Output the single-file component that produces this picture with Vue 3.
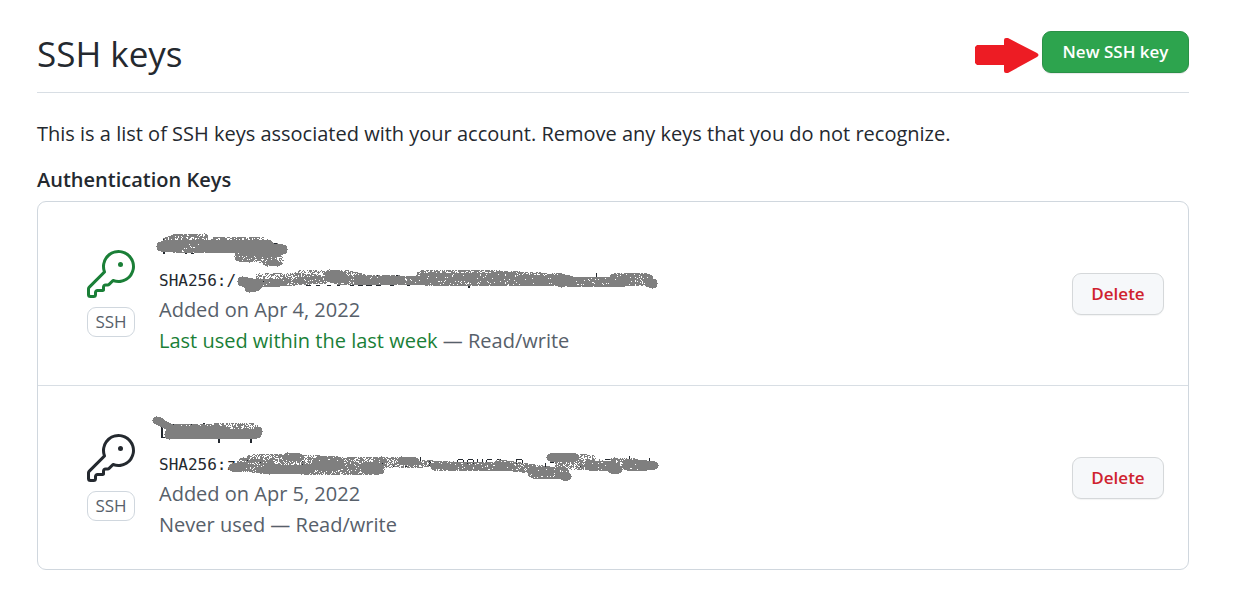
<script setup>
const OCTICON_KEY =
  'M15.75 0a8.25 8.25 0 1 1-2.541 16.101l-1.636 1.636a1.744 1.744 0 0 1-1.237.513H9.25a.25.25 0 0 0-.25.25v1.448a.876.876 0 0 1-.256.619l-.214.213a.75.75 0 0 1-.545.22H5.25a.25.25 0 0 0-.25.25v1A1.75 1.75 0 0 1 3.25 24h-1.5A1.75 1.75 0 0 1 0 22.25v-2.836c0-.464.185-.908.513-1.236l7.386-7.388A8.249 8.249 0 0 1 15.75 0ZM9 8.25a6.733 6.733 0 0 0 .463 2.462.75.75 0 0 1-.168.804l-7.722 7.721a.25.25 0 0 0-.073.177v2.836c0 .138.112.25.25.25h1.5a.25.25 0 0 0 .25-.25v-1c0-.966.784-1.75 1.75-1.75H7.5v-1c0-.966.784-1.75 1.75-1.75h1.086a.25.25 0 0 0 .177-.073l1.971-1.972a.75.75 0 0 1 .804-.168A6.75 6.75 0 1 0 9 8.25Z'

// Brush strokes: [x1, y1, x2, y2, radius, density].
// Each stroke is rasterised to single-pixel squares so sparse ones look sprayed.
function spray(strokes, seed) {
  let s = seed
  const rand = () => {
    s = (s * 1664525 + 1013904223) % 4294967296
    return s / 4294967296
  }
  const hit = new Set()
  for (const [x1, y1, x2, y2, r, density] of strokes) {
    const dx = x2 - x1
    const dy = y2 - y1
    const len = dx * dx + dy * dy || 1
    for (let y = Math.floor(Math.min(y1, y2) - r); y <= Math.max(y1, y2) + r; y++) {
      for (let x = Math.floor(Math.min(x1, x2) - r); x <= Math.max(x1, x2) + r; x++) {
        const t = Math.max(0, Math.min(1, ((x - x1) * dx + (y - y1) * dy) / len))
        const d = Math.hypot(x - x1 - t * dx, y - y1 - t * dy)
        if (d <= r && rand() < density) hit.add(x + ',' + y)
      }
    }
  }
  return [...hit].map((p) => `M${p.replace(',', ' ')}h1v1h-1z`).join('')
}

const keys = [
  {
    id: 1,
    active: true,
    prefix: 'SHA256:/',
    added: 'Added on Apr 4, 2022',
    used: 'Last used within the last week',
    ink: 'M4 7h2v2h-2zM4 20h2v2h-2zM26 21h2v1h-2zM32 21h3v1h-3zM43 8h2v2h-2zM62 6h1v2h-1zM115 11h4v1h-4zM118 12h2v2h-2zM110 23h2v6h-2zM104 47h1v4h-1zM102 49h5v1h-5zM116 48h3v2h-3zM125 48h3v1h-3zM147 53h5v1h-5zM157 53h4v1h-4zM168 53h4v1h-4zM178 53h3v1h-3zM191 53h4v1h-4zM199 53h5v1h-5zM207 53h6v1h-6zM217 53h5v1h-5zM208 43h4v1h-4zM217 43h4v1h-4zM227 43h4v1h-4zM237 43h4v1h-4zM231 53h4v1h-4zM248 53h3v1h-3zM309 53h2v3h-2zM437 41h1v5h-1z',
    marks: spray(
      [
        [6, 9, 12, 7, 4, 0.75], [14, 6, 45, 5, 4, 0.75],
        [2, 14, 18, 14, 5, 1], [14, 14, 48, 14, 6, 0.95], [46, 14, 88, 14, 6, 1],
        [84, 15, 108, 14, 7, 1], [96, 18, 117, 19, 6, 1], [118, 16, 123, 17, 5, 1],
        [56, 9, 104, 10, 5, 0.7], [80, 24, 90, 25, 5, 0.9],
        [92, 23, 108, 25, 6, 0.65], [108, 29, 119, 28, 5, 0.7], [110, 30, 118, 31, 3, 0.95]
      ],
      11
    ),
    hash: spray(
      [
        [83, 49, 98, 52, 5, 1], [90, 55, 96, 54, 5, 1], [98, 51, 120, 50, 4, 0.93],
        [100, 46, 145, 45, 5, 0.5], [120, 50, 166, 47, 4, 0.8],
        [140, 43, 170, 42, 5, 0.55], [171, 44, 180, 44, 6, 1],
        [178, 47, 240, 48, 5, 0.8], [184, 42, 202, 46, 5, 0.5],
        [200, 48, 268, 48, 4, 0.93], [262, 43, 340, 43, 5, 0.65],
        [266, 47, 366, 47, 6, 0.88], [340, 43, 402, 46, 5, 0.7],
        [365, 48, 410, 48, 5, 0.95], [402, 50, 465, 49, 5, 0.95],
        [455, 47, 488, 47, 6, 0.85], [490, 50, 493, 51, 5, 1]
      ],
      23
    )
  },
  {
    id: 2,
    active: false,
    prefix: 'SHA256:z',
    added: 'Added on Apr 5, 2022',
    used: 'Never used',
    ink: 'M2 10h2v12h-2zM4 21h3v1h-3zM14 8h4v1h-4zM20 8h4v1h-4zM31 8h3v1h-3zM44 7h2v4h-2zM59 23h2v4h-2zM91 23h2v4h-2zM101 12h1v6h-1zM87 44h8v1h-8zM100 45h2v3h-2zM143 45h2v5h-2zM223 44h2v7h-2zM234 50h3v1h-3zM246 50h4v1h-4zM261 41h1v7h-1zM270 44h2v6h-2zM299 43h5v1h-5zM298 44h1v4h-1zM304 44h1v4h-1zM309 43h5v1h-5zM308 44h1v4h-1zM314 44h1v4h-1zM318 43h1v4h-1zM323 43h1v4h-1zM328 43h5v1h-5zM327 44h1v4h-1zM338 43h4v1h-4zM357 43h6v1h-6zM357 44h1v4h-1zM363 44h1v3h-1zM386 47h1v4h-1zM391 46h4v1h-4zM421 50h4v1h-4zM446 43h5v1h-5zM454 55h5v1h-5zM470 40h1v7h-1zM490 42h1v6h-1zM486 46h4v1h-4z',
    marks: spray(
      [
        [-3, 4, 1, 5, 4, 1], [1, 6, 13, 12, 4, 1], [10, 18, 97, 17, 5, 1],
        [15, 12, 58, 12, 4, 0.85], [55, 12, 94, 12, 5, 0.6], [96, 17, 98, 15, 5, 0.9],
        [12, 14, 65, 15, 5, 1]
      ],
      37
    ),
    hash: spray(
      [
        [73, 51, 82, 51, 4, 1], [84, 48, 110, 51, 7, 0.88],
        [91, 42, 135, 41, 4, 0.6], [128, 40, 140, 41, 4, 0.92],
        [108, 53, 150, 53, 4, 1], [116, 46, 160, 46, 7, 0.6],
        [160, 47, 178, 47, 7, 0.96], [142, 53, 220, 53, 5, 0.8],
        [176, 47, 222, 46, 6, 0.7], [207, 51, 218, 52, 6, 1],
        [218, 46, 252, 46, 5, 0.55], [242, 44, 256, 45, 4, 1],
        [252, 47, 296, 49, 4, 0.65], [275, 50, 350, 50, 4, 0.9],
        [340, 48, 390, 55, 5, 0.85], [374, 56, 404, 57, 6, 0.88], [404, 60, 408, 60, 4, 1],
        [391, 41, 416, 41, 4, 1], [400, 49, 440, 48, 5, 0.65],
        [416, 42, 432, 42, 4, 0.5], [430, 49, 456, 50, 5, 0.95],
        [452, 53, 459, 53, 4, 1], [455, 46, 475, 47, 5, 0.7],
        [468, 49, 487, 49, 5, 0.95], [480, 49, 495, 49, 4, 1]
      ],
      53
    )
  }
]
</script>

<template>
  <main class="page">
    <header class="head">
      <h1>SSH keys</h1>
      <div class="actions">
        <svg class="arrow" width="64" height="36" viewBox="0 0 64 36" aria-hidden="true">
          <path d="M2 7H29V2Q29 0 31 0H33L62 15Q65 17 62 19L33 35H31Q29 35 29 33V27H2L0 25V9Z" />
        </svg>
        <button type="button" class="btn primary">New SSH key</button>
      </div>
    </header>

    <p class="intro">
      This is a list of SSH keys associated with your account. Remove any keys that you do not recognize.
    </p>

    <h2>Authentication Keys</h2>
    <ul class="list">
      <li v-for="key in keys" :key="key.id" class="row">
        <div class="kind" :class="{ active: key.active }">
          <svg width="48" height="48" viewBox="0 0 24 24" aria-hidden="true">
            <path d="M16.75 8.5a1.25 1.25 0 1 0 0-2.5 1.25 1.25 0 0 0 0 2.5Z" />
            <path :d="OCTICON_KEY" />
          </svg>
          <span class="badge">SSH</span>
        </div>
        <div class="details">
          <div class="name"></div>
          <code>{{ key.prefix }}</code>
          <div>{{ key.added }}</div>
          <div><span :class="{ recent: key.active }">{{ key.used }}</span> — Read/write</div>
          <svg class="scribble" width="510" height="72" viewBox="-8 0 510 72" shape-rendering="crispEdges" aria-hidden="true">
            <path class="ink" :d="key.ink" />
            <path class="spray" :d="key.marks" />
            <path class="spray" :d="key.hash" />
          </svg>
        </div>
        <button type="button" class="btn danger">Delete</button>
      </li>
    </ul>
  </main>
</template>

<style>
body {
  margin: 0;
  background: #fff;
}
</style>

<style scoped>
.page {
  box-sizing: border-box;
  padding: 24px 61px 23px 37px;
  color: #24292f;
  font: 20px/30px "Open Sans", "Noto Sans", sans-serif;
}
.head {
  display: flex;
  align-items: center;
  justify-content: space-between;
  height: 68px;
  border-bottom: 1px solid #d8dee4;
}
h1 {
  margin: 0;
  padding-bottom: 8px;
  font-size: 35px;
  font-weight: 400;
  line-height: 52px;
}
.actions {
  display: flex;
  align-items: center;
  gap: 3px;
  padding-bottom: 12px;
}
.arrow {
  fill: #ed1c24;
  margin-top: 8px;
}
.btn {
  box-sizing: border-box;
  height: 42px;
  padding: 0 16px;
  border: 1px solid #d5d8da;
  border-radius: 9px;
  font: 600 17px/28px "Open Sans", "Noto Sans", sans-serif;
  white-space: nowrap;
}
.primary {
  width: 147px;
  color: #fff;
  background: #2da44e;
  border-color: #2a9147;
  box-shadow: 0 1px 1px rgba(27, 31, 36, 0.1);
}
.danger {
  width: 92px;
  color: #cf222e;
  background: #f6f8fa;
  box-shadow: 0 1px 1px rgba(27, 31, 36, 0.05);
}
.intro {
  margin: 26px 0 16px;
}
h2 {
  margin: 0 0 6px;
  font: 600 20px/30px "Open Sans", "Noto Sans", sans-serif;
}
.list {
  margin: 0;
  padding: 0;
  list-style: none;
  border: 1px solid #d0d7de;
  border-radius: 9px;
}
.row {
  box-sizing: border-box;
  display: flex;
  align-items: center;
  min-height: 183px;
  padding: 0 24px 0 49px;
}
.row + .row {
  min-height: 184px;
  border-top: 1px solid #d8dee4;
}
.kind {
  display: flex;
  flex-direction: column;
  align-items: center;
  gap: 9px;
  width: 48px;
  color: #24292f;
}
.kind svg {
  fill: currentColor;
}
.kind.active {
  color: #1a7f37;
}
.badge {
  box-sizing: border-box;
  width: 48px;
  height: 30px;
  border: 1px solid #d0d7de;
  border-radius: 9px;
  color: #57606a;
  font-size: 17px;
  line-height: 28px;
  text-align: center;
}
.details {
  position: relative;
  flex: 1;
  margin-left: 24px;
  color: #57606a;
  line-height: 31px;
}
.name {
  height: 31px;
}
code {
  display: block;
  height: 31px;
  color: #24292f;
  font: 16px/35px "DejaVu Sans Mono", "Liberation Mono", monospace;
}
.recent {
  color: #1a7f37;
}
.scribble {
  position: absolute;
  top: 0;
  left: -8px;
}
.spray {
  fill: #7f7f7f;
}
.ink {
  fill: #24292f;
}
</style>
